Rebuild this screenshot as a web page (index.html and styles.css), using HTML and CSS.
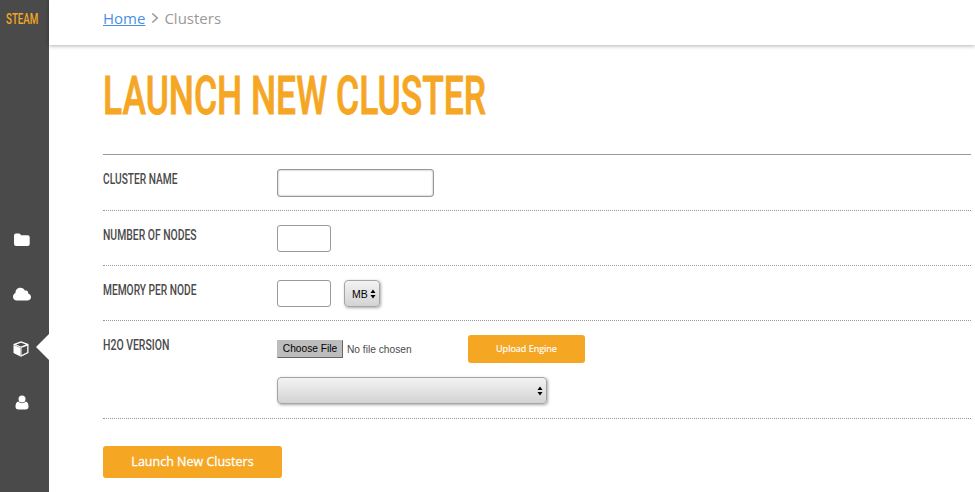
FILE: index.html
```html
<!DOCTYPE html>
<html lang="en">
<head>
<meta charset="utf-8">
<title>Steam</title>
<link rel="stylesheet" href="styles.css">
</head>
<body>
<nav class="sidebar">
  <a class="brand"><span class="narrow brand-text">STEAM</span></a>
  <a class="nav-item"><svg width="16" height="14" viewBox="0 0 16 14"><path d="M0 2.600Q0 .5 2 .5H5Q6.800 .5 6.800 2.200H13.700Q15.700 2.200 15.700 4.300V11Q15.700 13 13.700 13H2Q0 13 0 11Z"/></svg></a>
  <a class="nav-item"><svg width="18" height="14" viewBox="0 0 18 14"><path d="M4 13.500C1.500 13.500 0 11.800 0 9.700C0 8 1 6.600 2.500 6C2.300 2.800 4.500.7 7.300.7C9.600.7 11.200 1.900 12 3.800C13.900 2.900 15.700 4.500 15.100 6.500C16.900 6.900 18 8.200 18 9.900C18 12 16.500 13.500 14.300 13.500Z"/></svg></a>
  <a class="nav-item active"><svg width="16" height="16" viewBox="0 0 16 16"><path fill-rule="evenodd" d="M8 .3L15.500 3V12L8 15.700L.5 12V3ZM8 1.700L3 3.500L8 5.400L13 3.500ZM14.200 4.700L8.600 6.800V13.900L14.200 11.200Z"/><path d="M1 4.100L7.900 6.700V15" fill="none" stroke="#4a4a4a" stroke-width=".4"/></svg></a>
  <a class="nav-item"><svg width="14" height="15" viewBox="0 0 14 15"><circle cx="7" cy="4" r="3.500"/><path d="M3 6.500Q7 10 11 6.500Q13.500 7.500 13.500 11.500Q13.500 14.500 10.500 14.500H3.500Q.5 14.500 .5 11.500Q.5 7.500 3 6.500Z"/></svg></a>
</nav>
<div class="page">
  <header class="breadcrumb">
    <a class="home">Home</a>
    <svg width="8" height="10" viewBox="0 0 8 10"><path d="M1.300 .5L6.300 5L1.300 9.500" fill="none" stroke="#999" stroke-width="1.500"/></svg>
    <span>Clusters</span>
  </header>
  <main>
    <h1><span class="narrow title-text">LAUNCH NEW CLUSTER</span></h1>
    <form class="table">
      <div class="row first"><label class="label"><span class="narrow l1">CLUSTER NAME</span></label><input class="field name"></div>
      <div class="row"><label class="label"><span class="narrow l2">NUMBER OF NODES</span></label><input class="field small"></div>
      <div class="row"><label class="label"><span class="narrow l3">MEMORY PER NODE</span></label><input class="field small">
        <div class="select unit"><span>MB</span><svg width="6" height="10" viewBox="0 0 6 10"><path d="M3 .5L5.500 4H.5ZM3 9.500L5.500 6H.5Z"/></svg></div></div>
      <div class="row last"><label class="label"><span class="narrow l4">H2O VERSION</span></label>
        <div class="engine">
          <div class="upload"><span class="choose">Choose File</span><span class="status">No file chosen</span><button type="button" class="btn upload-btn">Upload Engine</button></div>
          <div class="select version"><svg width="6" height="10" viewBox="0 0 6 10"><path d="M3 .5L5.500 4H.5ZM3 9.500L5.500 6H.5Z"/></svg></div>
        </div></div>
    </form>
    <button type="button" class="btn launch">Launch New Clusters</button>
  </main>
</div>
</body>
</html>
```
FILE: styles.css
```css
* { box-sizing: border-box; }
body { margin: 0; height: 492px; display: flex; overflow: hidden; background: #fff; color: #4a4a4a; font-family: "Open Sans", sans-serif; }
.sidebar { width: 49px; height: 492px; flex: none; background: #4a4a4a; fill: #fff; }
.brand { display: block; height: 213px; padding: 7px 0 0 6px; }
.narrow { display: inline-block; white-space: nowrap; transform-origin: 0 50%; font-family: Roboto, sans-serif; font-weight: 500; }
.brand-text { color: #f5a623; font-size: 15px; line-height: 20px; transform: scaleX(.65); }
.nav-item { height: 54px; padding-right: 5px; display: flex; align-items: center; justify-content: center; position: relative; }
.active { padding-right: 7px; padding-top: 1px; }
.active::after { content: ""; position: absolute; right: 0; top: 13px; border: 13px solid transparent; border-right-color: #fff; border-left: 0; }
.page { flex: 1; min-width: 0; }
.breadcrumb { height: 45px; padding: 0 0 9px 54px; display: flex; align-items: center; font-size: 15px; color: #999; box-shadow: 0 1px 4px rgba(0, 0, 0, .3); }
.breadcrumb svg { margin: 0 5px 0 6px; }
.home { color: #4a90e2; text-decoration: underline; }
main { padding: 20px 4px 0 54px; }
h1 { margin: 0; height: 89px; line-height: 62px; color: #f5a623; }
.title-text { font-size: 53.5px; font-weight: 500; -webkit-text-stroke: .8px #f5a623; transform: scaleX(.662); }
.row { height: 55px; padding-top: 14px; display: flex; align-items: flex-start; border-bottom: 1px dotted #999; }
.first { height: 57px; border-top: 1px solid #999; }
.last { height: 98px; }
.label { width: 174px; flex: none; height: 20px; margin-top: -1px; line-height: 20px; font-size: 15px; }
.l1 { transform: scaleX(.68); }
.l2 { transform: scaleX(.692); }
.l3 { transform: scaleX(.68); }
.l4 { transform: scaleX(.698); }
.field { height: 27px; border: 1px solid #999; border-radius: 3px; padding: 4px; background: #fff; outline: 0; }
.name { width: 157px; height: 28px; box-shadow: inset 0 0 2px #999; }
.small { width: 54px; }
.select { height: 27px; display: flex; align-items: center; border: 1px solid #a5a5a5; border-radius: 4px; background: linear-gradient(#f3f3f3, #d3d3d3); box-shadow: 1px 1px 3px rgba(0, 0, 0, .35); }
.unit { width: 36px; margin-left: 13px; padding-left: 7px; gap: 2px; font: 10.5px "Liberation Sans", sans-serif; color: #000; }
.upload { height: 28px; display: flex; align-items: center; font: 10.2px "Liberation Sans", sans-serif; }
.choose { width: 66px; height: 18px; line-height: 16px; text-align: center; color: #000; background: #bdbdbd; border: 1px solid #bdbdbd; border-right-color: #666; border-bottom-color: #666; }
.status { width: 121px; margin-left: 4px; }
.btn { border: 0; border-radius: 3px; padding: 0 0 1px; background: #f5a623; color: #fff; font-family: "Open Sans", sans-serif; }
.upload-btn { width: 117px; height: 28px; font-size: 9px; font-weight: 500; -webkit-text-stroke: .2px #fff; }
.version { width: 270px; margin-top: 14px; justify-content: flex-end; padding-right: 3px; }
.launch { width: 179px; height: 32px; margin-top: 27px; font-size: 12.5px; font-weight: 500; -webkit-text-stroke: .3px #fff; display: block; }
```
